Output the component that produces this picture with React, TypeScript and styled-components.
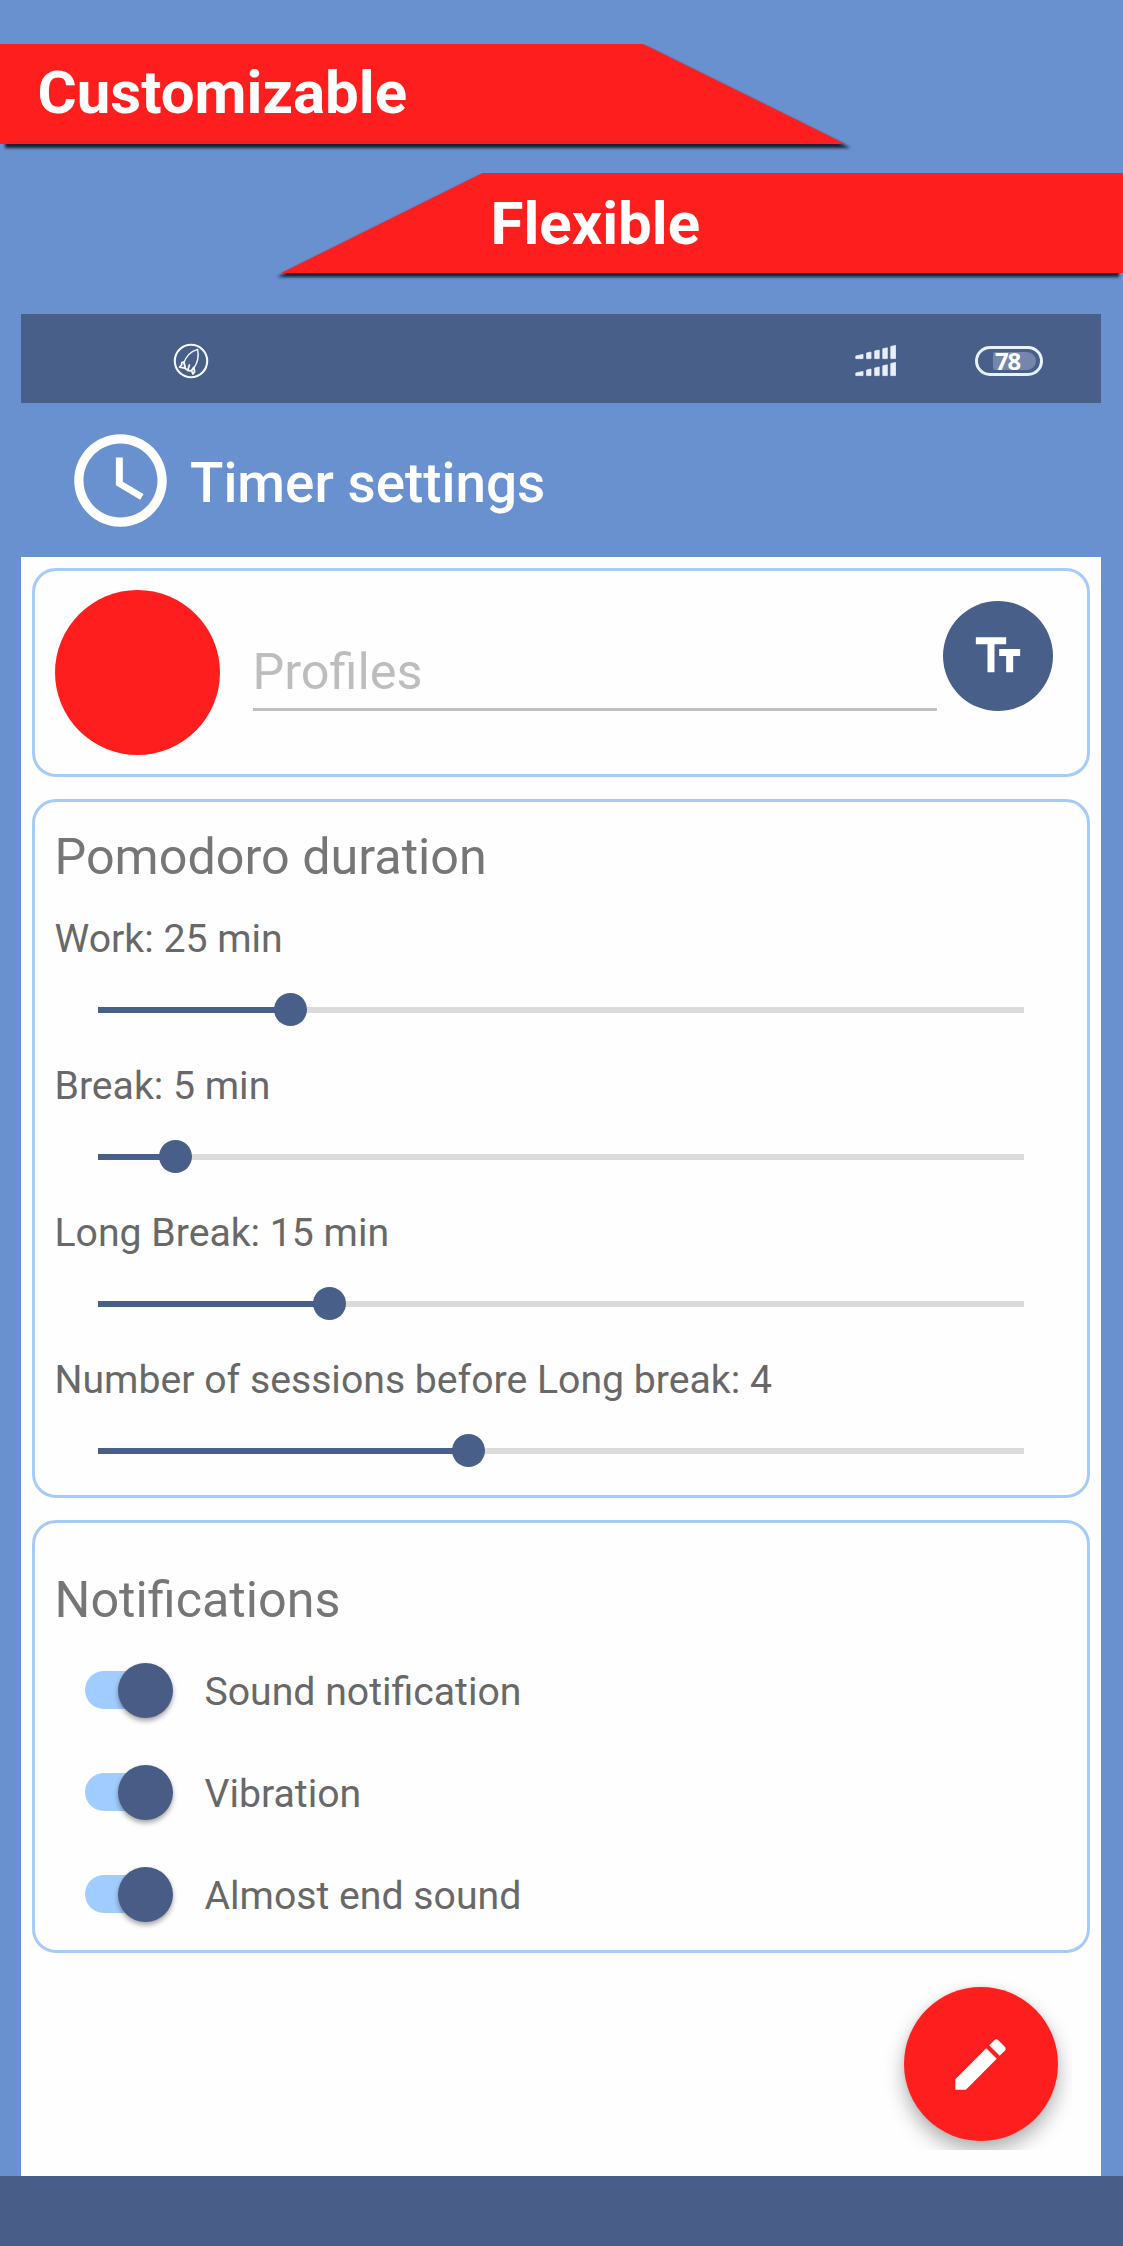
import React from "react";
import styled, { createGlobalStyle } from "styled-components";

const GlobalStyle = createGlobalStyle`
  * { box-sizing: border-box; }
  body { margin: 0; background: #6990cf; font-family: Roboto, "Liberation Sans", sans-serif; }
`;

const Page = styled.div`
  width: 1123px;
  height: 2246px;
  overflow: hidden;
  display: flex;
  flex-direction: column;
  background: #6990cf;
`;

const Banners = styled.div`
  height: 314px;
  padding-top: 44px;
  display: flex;
  flex-direction: column;
  gap: 28.5px;
`;

const RibbonShadow = styled.div<{ $side: "left" | "right" }>`
  display: flex;
  align-self: ${(p) => (p.$side === "left" ? "flex-start" : "flex-end")};
  filter: drop-shadow(${(p) => (p.$side === "left" ? "5px" : "-3.5px")} 4.5px 1.7px rgba(14, 16, 30, 0.88));
`;

const Ribbon = styled.div<{ $side: "left" | "right" }>`
  display: flex;
  align-items: center;
  width: ${(p) => (p.$side === "left" ? "846px" : "842px")};
  height: 100.3px;
  padding: ${(p) => (p.$side === "left" ? "0 0 2px 37.5px" : "2px 0 0 209.5px")};
  background: #ff1e1e;
  clip-path: ${(p) =>
    p.$side === "left"
      ? "polygon(0 0, 643px 0, 100% 100%, 0 100%)"
      : "polygon(202px 0, 100% 0, 100% 100%, 0 100%)"};
  color: #fff;
  font-size: 60px;
  font-weight: 700;
  line-height: 70px;
`;

const Screen = styled.div`
  width: 1080px;
  margin-left: 21px;
  flex: 1;
  display: flex;
  flex-direction: column;
`;

const StatusBar = styled.div`
  height: 89px;
  padding: 5px 58.5px 0 151.5px;
  display: flex;
  align-items: center;
  background: #485f8a;
`;

const StatusSpacer = styled.div`
  flex: 1;
`;

const Battery = styled.div`
  width: 68px;
  height: 30px;
  margin-left: 78px;
  padding: 3px 4px 3px 15px;
  display: flex;
  border: 3px solid #e9f1fd;
  border-radius: 15px;
`;

const BatteryLevel = styled.div`
  flex: 1;
  padding-left: 2.5px;
  border-radius: 2px 9px 9px 2px;
  background: #7685ac;
  color: #fff;
  font-family: "Open Sans", sans-serif;
  font-size: 24px;
  font-weight: 700;
  letter-spacing: -1.2px;
  line-height: 18px;
`;

const Header = styled.div`
  height: 154px;
  padding-left: 44px;
  display: flex;
  align-items: center;
  gap: 14px;
`;

const Title = styled.h1`
  margin: 0;
  padding-top: 6px;
  color: #fff;
  font-size: 54.8px;
  font-weight: 500;
  line-height: 64px;
`;

const Content = styled.div`
  height: 1619px;
  padding: 11px 11px 0 11px;
  display: flex;
  flex-direction: column;
  background: #fefefe;
`;

const Card = styled.section<{ $height: number; $gap?: number }>`
  height: ${(p) => p.$height}px;
  margin-bottom: ${(p) => p.$gap ?? 0}px;
  padding: 0 34px 0 19.5px;
  border: 3px solid #a6cbf9;
  border-radius: 24px;
`;

const ProfileCard = styled(Card)`
  display: flex;
  align-items: flex-start;
  padding-top: 19px;
`;

const ColorDot = styled.div`
  width: 165px;
  height: 165px;
  border-radius: 50%;
  background: #ff1e1e;
`;

const ProfileField = styled.div`
  width: 684px;
  height: 121px;
  margin-left: 33px;
  padding-top: 52px;
  border-bottom: 3px solid #c0c0c0;
  color: #bdbdbd;
  font-size: 50.4px;
  line-height: 60px;
`;

const TextButton = styled.div`
  width: 110px;
  height: 110px;
  margin: 11px 0 0 6px;
  display: flex;
  align-items: center;
  justify-content: center;
  border-radius: 50%;
  background: #485f8a;
`;

const CardTitle = styled.h2<{ $top: number }>`
  margin: 0;
  padding-top: ${(p) => p.$top}px;
  color: #767676;
  font-size: 50.3px;
  font-weight: 400;
  line-height: 60px;
`;

const SettingLabel = styled.div`
  color: #686868;
  font-size: 39.2px;
  line-height: 46px;
`;

const SliderList = styled.div`
  padding-top: 29px;
`;

const SliderRow = styled.div`
  height: 147px;
`;

const Track = styled.div`
  width: 926px;
  height: 34px;
  margin: 30.5px 0 0 43.5px;
  display: flex;
  align-items: center;
`;

const TrackFill = styled.div`
  height: 6px;
  background: #485f8a;
`;

const Thumb = styled.div`
  width: 33px;
  height: 33px;
  margin: 0 -16.5px;
  flex: none;
  z-index: 1;
  border-radius: 50%;
  background: #485f8a;
`;

const TrackRest = styled.div`
  flex: 1;
  height: 6px;
  background: #dbdbdb;
`;

const SwitchList = styled.div`
  padding: 9px 0 0 30.5px;
`;

const SwitchRow = styled.div`
  height: 102px;
  display: flex;
  align-items: center;
  gap: 31.5px;
`;

const SwitchTrack = styled.div`
  width: 88px;
  height: 38px;
  display: flex;
  align-items: center;
  justify-content: flex-end;
  border-radius: 19px;
  background: linear-gradient(90deg, #a1ccff 60px, transparent 60px);
`;

const SwitchThumb = styled.div`
  width: 55px;
  height: 55px;
  flex: none;
  border-radius: 50%;
  background: #485c86;
  box-shadow: 0 3px 5px rgba(0, 0, 0, 0.35);
`;

const SwitchLabel = styled(SettingLabel)`
  padding-top: 3px;
`;

const FabArea = styled.div`
  width: 198px;
  height: 187px;
  margin: 10px 18.5px 0 auto;
  padding: 24px 0 0 30px;
  overflow: hidden;
`;

const Fab = styled.div`
  width: 154px;
  height: 154px;
  display: flex;
  align-items: center;
  justify-content: center;
  border-radius: 50%;
  background: #ff1e1e;
  box-shadow: 0 10px 20px rgba(0, 0, 0, 0.3), 0 0 5px rgba(0, 0, 0, 0.08);
`;

const NavBar = styled.div`
  height: 70px;
  background: #485e89;
`;

const durations = [
  { label: "Work: 25 min", value: 5 / 24 },
  { label: "Break: 5 min", value: 1 / 12 },
  { label: "Long Break: 15 min", value: 1 / 4 },
  { label: "Number of sessions before Long break: 4", value: 2 / 5 },
];

const notifications = ["Sound notification", "Vibration", "Almost end sound"];

const RocketIcon = () => (
  <svg width="36" height="36" viewBox="0 0 36 36" fill="none" stroke="#f4f8ff" strokeLinejoin="round" strokeLinecap="round">
    <circle cx="18" cy="18" r="16.2" strokeWidth="2.1" />
    <path
      d="M10.6 20.5C12.5 14.5 17 8.5 24.6 6.3C26 13 24.5 20 20.6 25.5"
      strokeWidth="1.4"
    />
    <path
      d="M10.4 19L8.8 19.5L8.6 22L6.6 24.2L11.5 25L15 27.5L18.6 27.8L20 31L21.6 28.6L21 25.5M11.3 20.5L12.2 24.3M16.4 22L15 26.6M20.6 24.5L18.6 27.4"
      strokeWidth="1.8"
    />
  </svg>
);

const SignalIcon = () => (
  <svg width="42" height="32" viewBox="0 0 42 32" fill="#e9eff9" stroke="#e9eff9" strokeWidth="0.8" strokeLinejoin="round">
    {[0, 17].map((y) => (
      <path
        key={y}
        transform={`translate(0 ${y})`}
        d="M.8 11L8 9.4V13.6H.8ZM11.6 8L16 7V13.6H11.6ZM19.7 6L24.2 5V13.6H19.7ZM27.8 3.8L32.3 2.8V13.6H27.8ZM35.8 1.4L40.5.5V13.6H35.8Z"
      />
    ))}
  </svg>
);

const ClockIcon = () => (
  <svg width="111" height="111" viewBox="0 0 24 24" fill="#fff">
    <path d="M11.99 2C6.47 2 2 6.48 2 12s4.47 10 9.99 10C17.52 22 22 17.52 22 12S17.52 2 11.99 2zM12 20c-4.42 0-8-3.58-8-8s3.58-8 8-8 8 3.58 8 8-3.58 8-8 8z" />
    <path d="M12.5 7H11v6l5.25 3.15.75-1.23-4.5-2.67z" />
  </svg>
);

const TextFieldsIcon = () => (
  <svg width="56" height="56" viewBox="0 0 24 24" fill="#fff">
    <path d="M2.5 4v3h5v12h3V7h5V4h-13zm19 5h-9v3h3v7h3v-7h3V9z" />
  </svg>
);

const PencilIcon = () => (
  <svg width="67" height="67" viewBox="0 0 24 24" fill="#fff">
    <path d="M3 17.25V21h3.75L17.81 9.94l-3.75-3.75L3 17.25zM20.71 7.04c.39-.39.39-1.02 0-1.41l-2.34-2.34c-.39-.39-1.02-.39-1.41 0l-1.83 1.83 3.75 3.75 1.83-1.83z" />
  </svg>
);

const Slider = ({ label, value }: { label: string; value: number }) => (
  <SliderRow>
    <SettingLabel>{label}</SettingLabel>
    <Track>
      <TrackFill style={{ width: `${value * 100}%` }} />
      <Thumb />
      <TrackRest />
    </Track>
  </SliderRow>
);

export default function App() {
  return (
    <>
      <GlobalStyle />
      <Page>
        <Banners>
          <RibbonShadow $side="left">
            <Ribbon $side="left">Customizable</Ribbon>
          </RibbonShadow>
          <RibbonShadow $side="right">
            <Ribbon $side="right">Flexible</Ribbon>
          </RibbonShadow>
        </Banners>
        <Screen>
          <StatusBar>
            <RocketIcon />
            <StatusSpacer />
            <SignalIcon />
            <Battery>
              <BatteryLevel>78</BatteryLevel>
            </Battery>
          </StatusBar>
          <Header>
            <ClockIcon />
            <Title>Timer settings</Title>
          </Header>
          <Content>
            <ProfileCard $height={209} $gap={22}>
              <ColorDot />
              <ProfileField>Profiles</ProfileField>
              <TextButton>
                <TextFieldsIcon />
              </TextButton>
            </ProfileCard>
            <Card $height={699} $gap={22}>
              <CardTitle $top={25}>Pomodoro duration</CardTitle>
              <SliderList>
                {durations.map((d) => (
                  <Slider key={d.label} {...d} />
                ))}
              </SliderList>
            </Card>
            <Card $height={433}>
              <CardTitle $top={47}>Notifications</CardTitle>
              <SwitchList>
                {notifications.map((name) => (
                  <SwitchRow key={name}>
                    <SwitchTrack>
                      <SwitchThumb />
                    </SwitchTrack>
                    <SwitchLabel>{name}</SwitchLabel>
                  </SwitchRow>
                ))}
              </SwitchList>
            </Card>
            <FabArea>
              <Fab>
                <PencilIcon />
              </Fab>
            </FabArea>
          </Content>
        </Screen>
        <NavBar />
      </Page>
    </>
  );
}
